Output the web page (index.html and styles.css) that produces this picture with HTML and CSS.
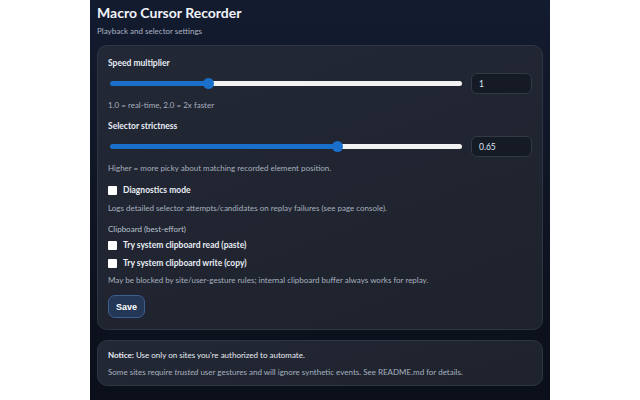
FILE: index.html
```html
<!DOCTYPE html>
<html lang="en">
<head>
    <meta charset="UTF-8">
    <meta name="viewport" content="width=device-width, initial-scale=1.0">
    <title>Macro Cursor Recorder - Options</title>
    <link rel="stylesheet" href="styles.css">
</head>
<body>
    <h1>Macro Cursor Recorder</h1>
    <p class="subtitle">Playback and selector settings</p>

    <div class="card">
        <div class="field">
            <label class="label" for="speedRange">Speed multiplier</label>
            <div class="range-row">
                <input type="range" id="speedRange" class="slider" min="0.25" max="3" step="0.05" value="1" style="--fill: 28%">
                <input type="text" id="speedValue" class="num" value="1">
            </div>
            <div class="hint">1.0 = real-time, 2.0 = 2x faster</div>
        </div>

        <div class="field">
            <label class="label" for="strictRange">Selector strictness</label>
            <div class="range-row">
                <input type="range" id="strictRange" class="slider" min="0" max="1" step="0.05" value="0.65" style="--fill: 65%">
                <input type="text" id="strictValue" class="num" value="0.65">
            </div>
            <div class="hint">Higher = more picky about matching recorded element position.</div>
        </div>

        <div class="check-row first">
            <input type="checkbox" id="diagnostics">
            <label for="diagnostics">Diagnostics mode</label>
        </div>
        <div class="hint log-hint">Logs detailed selector attempts/candidates on replay failures (see page console).</div>

        <div class="section-title">Clipboard (best-effort)</div>
        <div class="check-row">
            <input type="checkbox" id="clipRead">
            <label for="clipRead">Try system clipboard read (paste)</label>
        </div>
        <div class="check-row second">
            <input type="checkbox" id="clipWrite">
            <label for="clipWrite">Try system clipboard write (copy)</label>
        </div>
        <div class="hint clip-hint">May be blocked by site/user-gesture rules; internal clipboard buffer always works for replay.</div>

        <button id="saveBtn" class="save-btn">Save</button>
    </div>

    <div class="card notice">
        <div class="notice-line"><strong>Notice:</strong> Use only on sites you're authorized to automate.</div>
        <div class="notice-line muted">Some sites require <em>trusted</em> user gestures and will ignore synthetic events. See README.md for details.</div>
    </div>

    <script>
        document.querySelectorAll('.slider').forEach(slider => {
            const box = slider.parentNode.querySelector('.num');
            slider.addEventListener('input', () => {
                const pct = (slider.value - slider.min) / (slider.max - slider.min) * 100;
                slider.style.setProperty('--fill', pct + '%');
                box.value = slider.value;
            });
        });
    </script>
</body>
</html>
```

FILE: styles.css
```css
html {
    background-color: #ffffff;
}
body {
    font-family: Lato, "Open Sans", sans-serif;
    max-width: 460px;
    min-height: 100vh;
    margin: 0 auto;
    padding: 3px 7px 20px;
    box-sizing: border-box;
    background: linear-gradient(180deg, #131b2f 0%, #0f1524 50%, #0b0f19 100%);
    color: #e7ecf3;
}
h1 {
    font-size: 14px;
    line-height: 20px;
    margin: 0;
    color: #f1f4f9;
}
.subtitle {
    font-size: 8px;
    line-height: 12px;
    margin: 2px 0 8px;
    color: #aab3c2;
}
.card {
    background: linear-gradient(160deg, #232836 0%, #1e222c 100%);
    border: 1px solid #2e3543;
    border-radius: 10px;
    padding: 11px 10px 11px;
}
.field {
    margin-bottom: 9px;
}
.label, .check-row label {
    display: block;
    font-size: 8.5px;
    font-weight: 700;
    line-height: 12px;
    color: #e8edf4;
}
.range-row {
    display: flex;
    align-items: center;
    gap: 9px;
    height: 21px;
    margin: 4px 0 5px;
}
.slider {
    -webkit-appearance: none;
    appearance: none;
    flex: 1;
    margin: 0 0 0 2px;
    height: 5px;
    border-radius: 3px;
    background: linear-gradient(90deg, #1a6fcb var(--fill), #f2f2f2 var(--fill));
}
.slider::-webkit-slider-thumb {
    -webkit-appearance: none;
    width: 11px;
    height: 11px;
    border-radius: 50%;
    background: #1a6fcb;
    border: none;
}
.num {
    width: 61px;
    height: 21px;
    box-sizing: border-box;
    padding: 0 7px;
    background: #151a25;
    border: 1px solid #323947;
    border-radius: 6px;
    color: #dce6f5;
    font-family: inherit;
    font-size: 8.5px;
}
.hint {
    font-size: 8px;
    line-height: 12px;
    color: #a6b0bf;
}
.check-row {
    display: flex;
    align-items: center;
    gap: 6px;
    height: 12px;
}
.check-row input {
    -webkit-appearance: none;
    appearance: none;
    width: 9px;
    height: 9px;
    margin: 0;
    background: #ffffff;
    border-radius: 1px;
}
.check-row.first {
    margin-top: 10px;
}
.check-row.second {
    margin-top: 6px;
}
.log-hint {
    margin: 6px 0 9px;
}
.section-title {
    font-size: 8px;
    line-height: 12px;
    color: #b8c1ce;
    margin-bottom: 4px;
}
.clip-hint {
    margin: 5px 0 9px;
}
.save-btn {
    display: block;
    height: 23px;
    padding: 0 7px;
    background-color: #243757;
    border: 1px solid #3c5f91;
    border-radius: 7px;
    color: #ffffff;
    font-family: "Liberation Sans", Arial, sans-serif;
    font-size: 9px;
    font-weight: 700;
    cursor: pointer;
}
.save-btn:hover {
    background-color: #2b4268;
}
.notice {
    margin-top: 10px;
    padding: 8px 10px 7px;
}
.notice-line {
    font-size: 8px;
    line-height: 12px;
    color: #e8edf4;
}
.notice-line.muted {
    margin-top: 5px;
    color: #a6b0bf;
}
```
